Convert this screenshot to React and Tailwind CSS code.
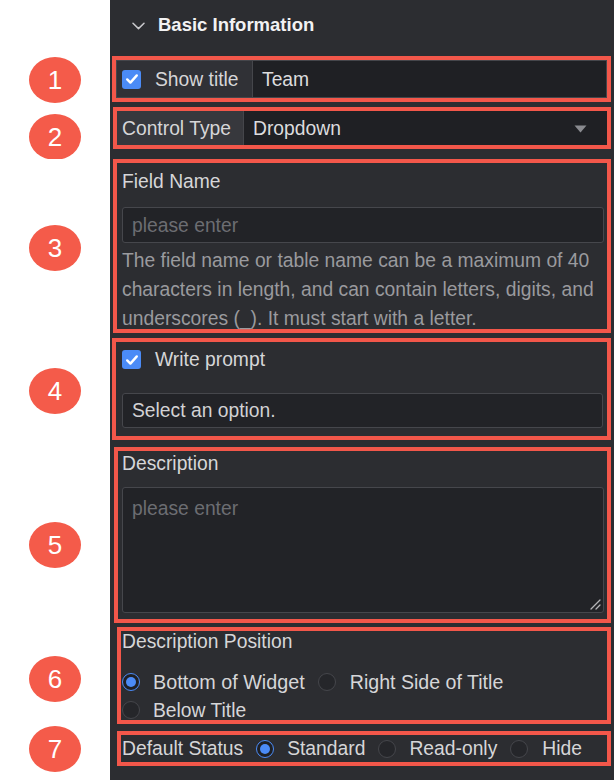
import React from "react";

const FONT = "font-['Liberation_Sans','Helvetica','Arial',sans-serif]";

function Badge({ n, mt }) {
  return (
    <div
      className={`w-[52px] h-[46px] rounded-[50%] bg-[#f45b4a] text-white text-[26px] leading-none flex items-center justify-center ${mt}`}
    >
      {n}
    </div>
  );
}

function Check() {
  return (
    <div className="w-[19px] h-[19px] rounded-[3px] bg-[#4b8bf6] flex items-center justify-center shrink-0">
      <svg width="14" height="14" viewBox="0 0 14 14" fill="none">
        <path d="M2.2 7.4 L5.4 10.6 L11.8 3.4" stroke="white" strokeWidth="2.4" strokeLinecap="round" strokeLinejoin="round" />
      </svg>
    </div>
  );
}

function Radio({ checked }) {
  return checked ? (
    <div className="w-[18px] h-[18px] rounded-full border-[1.5px] border-[#4b8bf6] bg-[#1f2024] flex items-center justify-center shrink-0">
      <div className="w-[10px] h-[10px] rounded-full bg-[#4b8bf6]" />
    </div>
  ) : (
    <div className="w-[18px] h-[18px] rounded-full border border-[#45464b] bg-[#25262a] shrink-0" />
  );
}

function Row({ badge, height, pl, children }) {
  return (
    <div className={`flex ${height}`}>
      <div className="w-[110px] shrink-0 bg-white flex justify-center items-start">{badge}</div>
      <div className={`flex-1 bg-[#2c2d31] ${pl} pr-[3px]`}>{children}</div>
    </div>
  );
}

const box = "border-[4px] border-[#f3574a] box-border";

export default function App() {
  return (
    <div className={`w-[614px] h-[780px] overflow-hidden ${FONT} text-[19.3px] text-[#d6d6d8]`}>
      {/* header */}
      <div className="flex h-[56px]">
        <div className="w-[110px] shrink-0 bg-white" />
        <div className="flex-1 bg-[#2c2d31] flex items-start pt-[14px]">
          <div className="w-[48px] flex justify-end pr-[13px] pt-[8px]">
            <svg width="13" height="8" viewBox="0 0 13 8" fill="none">
              <path d="M1 1.2 L6.5 6.6 L12 1.2" stroke="#c9c9cc" strokeWidth="1.5" strokeLinecap="round" strokeLinejoin="round" />
            </svg>
          </div>
          <span className="text-[18.5px] font-bold text-[#f2f2f3] leading-[22px]">Basic Information</span>
        </div>
      </div>

      {/* 1 */}
      <Row badge={<Badge n="1" mt="mt-[1px]" />} height="h-[51px]" pl="pl-[2px]">
        <div className={`${box} h-[46px]`}>
          <div className="h-full border border-[#45464b] flex">
            <div className="flex items-center w-[135px] bg-[#303136] pl-[5px]">
              <Check />
              <span className="ml-[14px] pt-[2px]">Show title</span>
            </div>
            <div className="flex-1 border-l border-[#45464b] bg-[#1f2024] flex items-center pl-[9px] pt-[2px] text-[#dcdcde]">Team</div>
          </div>
        </div>
      </Row>

      {/* 2 */}
      <Row badge={<Badge n="2" mt="mt-[7px]" />} height="h-[52px]" pl="pl-[3px]">
        <div className={`${box} h-[42px]`}>
          <div className="h-full flex">
            <div className="w-[126px] bg-[#37383d] flex items-center pl-[5px] pt-[3px]">Control Type</div>
            <div className="flex-1 border-l border-[#45464b] bg-[#1f2024] flex items-center pl-[9px] pr-[20px] text-[#dcdcde]">
              <span className="flex-1 pt-[3px]">Dropdown</span>
              <svg width="13" height="8" viewBox="0 0 13 8" className="mt-[2px]">
                <path d="M0.5 0.5 H12.5 L6.5 7.5 Z" fill="#8a8b90" />
              </svg>
            </div>
          </div>
        </div>
      </Row>

      {/* 3 */}
      <Row badge={<Badge n="3" mt="mt-[66px]" />} height="h-[179px]" pl="pl-[3px]">
        <div className={`${box} h-[174px] pl-[5px] pr-[3px] pt-[5px]`}>
          <div className="leading-[28px]">Field Name</div>
          <div className="mt-[11px] h-[36px] rounded-[3px] border border-[#46474c] bg-[#222327] flex items-center pl-[9px] pt-[2px] text-[#6c6d72]">
            please enter
          </div>
          <div className="relative z-10 mt-[3px] leading-[29px] text-[#9a9a9e] whitespace-nowrap">
            <div>The field name or table name can be a maximum of 40</div>
            <div>characters in length, and can contain letters, digits, and</div>
            <div>underscores (_). It must start with a letter.</div>
          </div>
        </div>
      </Row>

      {/* 4 */}
      <Row badge={<Badge n="4" mt="mt-[30px]" />} height="h-[109px]" pl="pl-[2px]">
        <div className={`${box} h-[102px] pl-[6px] pr-[4px] pt-[8px]`}>
          <div className="flex items-center h-[19px]">
            <Check />
            <span className="ml-[14px] pt-[2px]">Write prompt</span>
          </div>
          <div className="mt-[24px] h-[35px] rounded-[3px] border border-[#46474c] bg-[#222327] flex items-center pl-[9px] pt-[2px] text-[#d2d2d4]">
            Select an option.
          </div>
        </div>
      </Row>

      {/* 5 */}
      <Row badge={<Badge n="5" mt="mt-[75px]" />} height="h-[180px]" pl="pl-[4px]">
        <div className={`${box} h-[176px] pl-[4px] pr-[3px]`}>
          <div className="leading-[24px] pt-[1px]">Description</div>
          <div className="relative mt-[11px] h-[126px] rounded-[3px] border border-[#46474c] bg-[#222327] pl-[9px] pt-[9px] leading-[24px] text-[#6c6d72]">
            please enter
            <svg className="absolute right-[2px] bottom-[2px]" width="12" height="12" viewBox="0 0 12 12">
              <path d="M11 2 L2 11 M11 7 L7 11" stroke="#b5b5b8" strokeWidth="1.3" strokeLinecap="round" />
            </svg>
          </div>
        </div>
      </Row>

      {/* 6 */}
      <Row badge={<Badge n="6" mt="mt-[29px]" />} height="h-[104px]" pl="pl-[7px]">
        <div className={`${box} h-[97px] pl-[1px]`}>
          <div className="leading-[20px] pt-[1px]">Description Position</div>
          <div className="mt-[16px] flex items-center h-[28px]">
            <Radio checked />
            <span className="ml-[13px] pt-[2px] text-[19.8px]">Bottom of Widget</span>
            <div className="ml-[13px]"><Radio /></div>
            <span className="ml-[14px] pt-[2px] text-[19.6px]">Right Side of Title</span>
          </div>
          <div className="flex items-center h-[28px]">
            <Radio />
            <span className="ml-[13px] pt-[2px]">Below Title</span>
          </div>
        </div>
      </Row>

      {/* 7 */}
      <Row badge={<Badge n="7" mt="-mt-[5px]" />} height="h-[49px]" pl="pl-[7px]">
        <div className={`${box} h-[35px] pl-[1px] flex items-center`}>
          <span className="pt-[2px]">Default Status</span>
          <div className="ml-[13px]"><Radio checked /></div>
          <span className="ml-[13px] pt-[2px]">Standard</span>
          <div className="ml-[13px]"><Radio /></div>
          <span className="ml-[13px] pt-[2px]">Read-only</span>
          <div className="ml-[13px]"><Radio /></div>
          <span className="ml-[14px] pt-[2px]">Hide</span>
        </div>
      </Row>
    </div>
  );
}
